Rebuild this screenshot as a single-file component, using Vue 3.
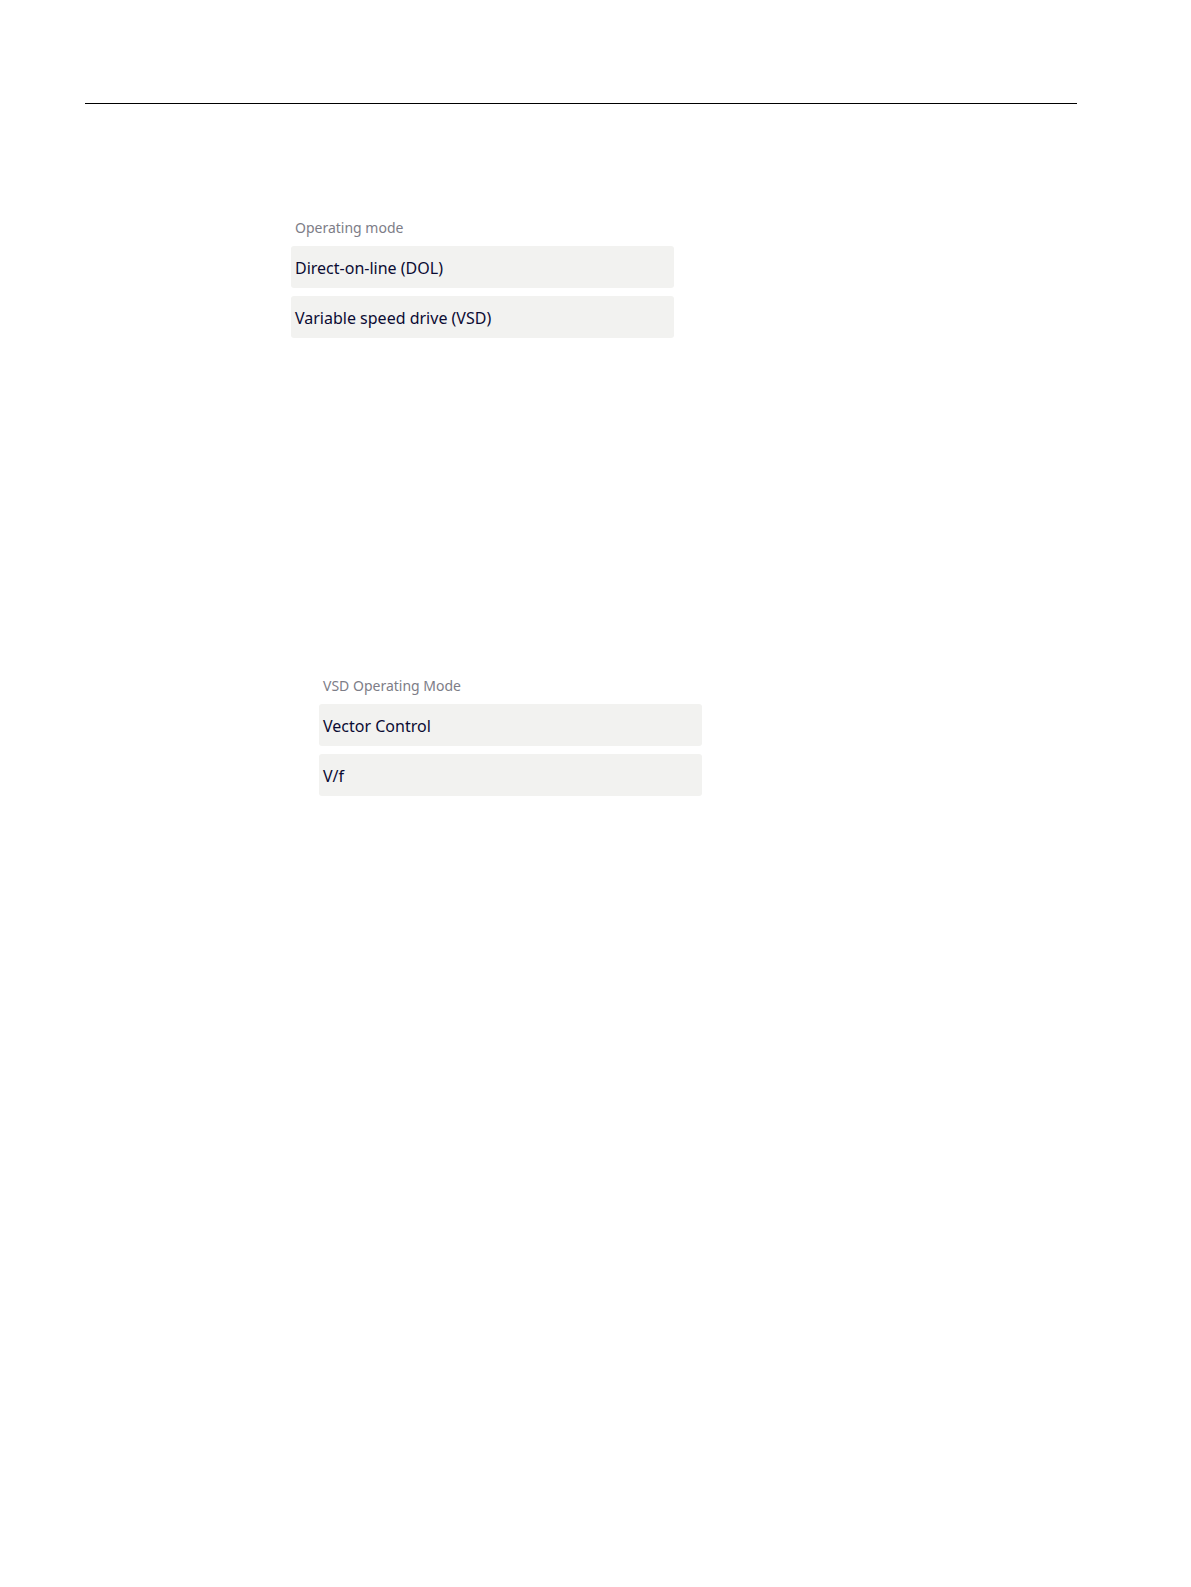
<template>
    <main class="page">
        <hr class="rule" />
        <section
            v-for="group in groups"
            :key="group.id"
            class="group"
            :class="{ nested: group.nested }"
            role="group"
            :aria-labelledby="group.id"
        >
            <h2 :id="group.id" class="group-label">{{ group.label }}</h2>
            <button
                v-for="option in group.options"
                :key="option"
                type="button"
                class="option"
                :aria-pressed="selected[group.id] === option"
                @click="selected[group.id] = option"
            >
                {{ option }}
            </button>
        </section>
    </main>
</template>

<script setup>
import { reactive } from 'vue';

const groups = [
    {
        id: 'operating-mode',
        label: 'Operating mode',
        options: ['Direct-on-line (DOL)', 'Variable speed drive (VSD)'],
        nested: false
    },
    {
        id: 'vsd-operating-mode',
        label: 'VSD Operating Mode',
        options: ['Vector Control', 'V/f'],
        nested: true
    }
];

const selected = reactive({});
</script>

<style>
body {
    margin: 0;
    background: #fff;
}
</style>

<style scoped>
.page {
    padding: 103px 114px 64px 85px;
    font-family: 'Noto Sans', 'Open Sans', sans-serif;
}

.rule {
    height: 1px;
    margin: 0;
    border: none;
    background: #000;
}

.group {
    display: flex;
    flex-direction: column;
    gap: 8px;
    max-width: 383px;
    margin: 114px 0 0 206px;
}

.group.nested {
    margin: 338px 0 0 234px;
}

.group-label {
    margin: 0;
    padding: 0 4px;
    color: #7d7d87;
    font-size: 14px;
    font-weight: 400;
    line-height: 20px;
}

.option {
    height: 42px;
    padding: 2px 4px 0;
    border: none;
    border-radius: 3px;
    background: #f2f2f0;
    color: #0b0b33;
    font-family: inherit;
    font-size: 16px;
    line-height: 24px;
    text-align: left;
    cursor: pointer;
}
</style>
